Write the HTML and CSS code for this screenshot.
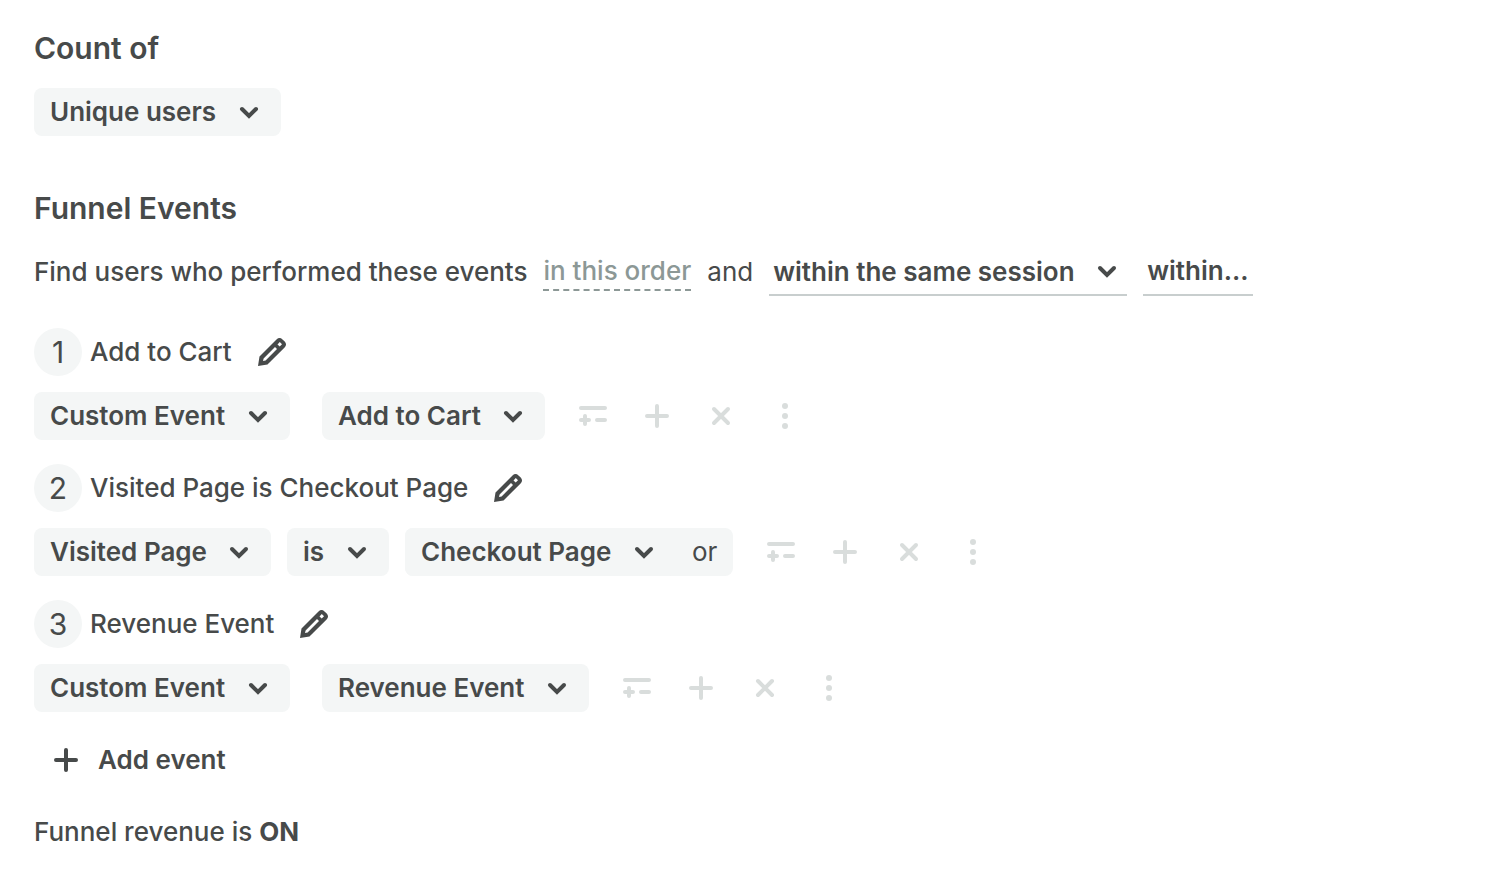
FILE: index.html
```html
<!DOCTYPE html>
<html lang="en">
<head>
    <meta charset="UTF-8">
    <meta name="viewport" content="width=device-width, initial-scale=1.0">
    <title>Funnel Events</title>
    <link rel="stylesheet" href="styles.css">
</head>
<body>
    <!-- Shared icons -->
    <svg class="sprite" aria-hidden="true">
        <symbol id="icon-chevron" viewBox="0 0 32 32">
            <path d="M9 13l7 7 7-7" fill="none" stroke="currentColor" stroke-width="4" stroke-linecap="round"/>
        </symbol>
        <symbol id="icon-pencil" viewBox="0 0 32 32">
            <path fill="currentColor" fill-rule="evenodd" d="M2 30L3.500 20.500L20.500 3.500Q23.500 0.700 26.500 3.400L28.700 5.600Q31.400 8.600 28.600 11.500L11.500 28.500ZM7.600 22.400L7 25L9.600 24.400L21 13L19 11ZM21.500 8.400L23.700 10.600L26 8.300L23.800 6.100Z"/>
        </symbol>
        <symbol id="icon-filter" viewBox="0 0 32 32">
            <path d="M4 8h24M4 20h8M8 16v8M20 20h8" fill="none" stroke="currentColor" stroke-width="4" stroke-linecap="round"/>
        </symbol>
        <symbol id="icon-plus" viewBox="0 0 32 32">
            <path d="M6 16h20M16 6v20" fill="none" stroke="currentColor" stroke-width="4" stroke-linecap="round"/>
        </symbol>
        <symbol id="icon-close" viewBox="0 0 32 32">
            <path d="M9 9l14 14M23 9L9 23" fill="none" stroke="currentColor" stroke-width="4" stroke-linecap="round"/>
        </symbol>
        <symbol id="icon-more" viewBox="0 0 32 32">
            <g fill="currentColor">
                <circle cx="16" cy="6" r="3"/>
                <circle cx="16" cy="16" r="3"/>
                <circle cx="16" cy="26" r="3"/>
            </g>
        </symbol>
    </svg>

    <form class="funnel">
        <h2><label for="count-of">Count of</label></h2>
        <div class="row">
            <div class="dropdown">
                <select id="count-of"><option>Unique users</option></select>
                <svg class="icon"><use href="#icon-chevron"/></svg>
            </div>
        </div>

        <h2 class="funnel-title">Funnel Events</h2>
        <div class="row">
            <span class="sentence">Find users who performed these events</span>
            <button type="button" class="order">in this order</button>
            <span class="and">and</span>
            <div class="dropdown underlined">
                <select aria-label="Session window"><option>within the same session</option></select>
                <svg class="icon"><use href="#icon-chevron"/></svg>
            </div>
            <button type="button" class="within">within...</button>
        </div>

        <ol class="events">
            <li class="event">
                <div class="event-name">
                    <span class="number">1</span>
                    <span>Add to Cart</span>
                    <button type="button" class="icon-button edit" aria-label="Rename"><svg class="icon"><use href="#icon-pencil"/></svg></button>
                </div>
                <div class="row">
                    <div class="dropdown event-type">
                        <select aria-label="Event type"><option>Custom Event</option></select>
                        <svg class="icon"><use href="#icon-chevron"/></svg>
                    </div>
                    <div class="dropdown">
                        <select aria-label="Event"><option>Add to Cart</option></select>
                        <svg class="icon"><use href="#icon-chevron"/></svg>
                    </div>
                    <div class="actions">
                        <button type="button" class="icon-button" aria-label="Filter"><svg class="icon"><use href="#icon-filter"/></svg></button>
                        <button type="button" class="icon-button" aria-label="Add"><svg class="icon"><use href="#icon-plus"/></svg></button>
                        <button type="button" class="icon-button" aria-label="Remove"><svg class="icon"><use href="#icon-close"/></svg></button>
                        <button type="button" class="icon-button" aria-label="More"><svg class="icon"><use href="#icon-more"/></svg></button>
                    </div>
                </div>
            </li>
            <li class="event">
                <div class="event-name">
                    <span class="number">2</span>
                    <span>Visited Page is Checkout Page</span>
                    <button type="button" class="icon-button edit" aria-label="Rename"><svg class="icon"><use href="#icon-pencil"/></svg></button>
                </div>
                <div class="row">
                    <div class="dropdown">
                        <select aria-label="Event type"><option>Visited Page</option></select>
                        <svg class="icon"><use href="#icon-chevron"/></svg>
                    </div>
                    <div class="dropdown">
                        <select aria-label="Operator"><option>is</option></select>
                        <svg class="icon"><use href="#icon-chevron"/></svg>
                    </div>
                    <div class="value-group">
                        <div class="dropdown">
                            <select aria-label="Page"><option>Checkout Page</option></select>
                            <svg class="icon"><use href="#icon-chevron"/></svg>
                        </div>
                        <button type="button" class="or">or</button>
                    </div>
                    <div class="actions">
                        <button type="button" class="icon-button" aria-label="Filter"><svg class="icon"><use href="#icon-filter"/></svg></button>
                        <button type="button" class="icon-button" aria-label="Add"><svg class="icon"><use href="#icon-plus"/></svg></button>
                        <button type="button" class="icon-button" aria-label="Remove"><svg class="icon"><use href="#icon-close"/></svg></button>
                        <button type="button" class="icon-button" aria-label="More"><svg class="icon"><use href="#icon-more"/></svg></button>
                    </div>
                </div>
            </li>
            <li class="event">
                <div class="event-name">
                    <span class="number">3</span>
                    <span>Revenue Event</span>
                    <button type="button" class="icon-button edit" aria-label="Rename"><svg class="icon"><use href="#icon-pencil"/></svg></button>
                </div>
                <div class="row">
                    <div class="dropdown event-type">
                        <select aria-label="Event type"><option>Custom Event</option></select>
                        <svg class="icon"><use href="#icon-chevron"/></svg>
                    </div>
                    <div class="dropdown">
                        <select aria-label="Event"><option>Revenue Event</option></select>
                        <svg class="icon"><use href="#icon-chevron"/></svg>
                    </div>
                    <div class="actions">
                        <button type="button" class="icon-button" aria-label="Filter"><svg class="icon"><use href="#icon-filter"/></svg></button>
                        <button type="button" class="icon-button" aria-label="Add"><svg class="icon"><use href="#icon-plus"/></svg></button>
                        <button type="button" class="icon-button" aria-label="Remove"><svg class="icon"><use href="#icon-close"/></svg></button>
                        <button type="button" class="icon-button" aria-label="More"><svg class="icon"><use href="#icon-more"/></svg></button>
                    </div>
                </div>
            </li>
        </ol>

        <button type="button" class="add-event">
            <svg class="icon"><use href="#icon-plus"/></svg>
            Add event
        </button>
        <p class="revenue">Funnel revenue is <strong>ON</strong></p>
    </form>
</body>
</html>
```
FILE: styles.css
```css
* {
    box-sizing: border-box;
}
body {
    margin: 0;
    background-color: #fff;
    color: #474a4a;
    font-family: Inter, "Liberation Sans", sans-serif;
    font-size: 26px;
    font-weight: 500;
    line-height: 48px;
}
.sprite {
    display: none;
}
.funnel {
    padding: 24px 34px 16px;
}
h2 {
    margin: 0 0 16px;
    font-size: 30px;
    font-weight: 600;
    line-height: 48px;
}
.funnel-title {
    margin-top: 48px;
}
button,
select {
    margin: 0;
    padding: 0;
    border: none;
    background: none;
    color: inherit;
    font: inherit;
    cursor: pointer;
}
.icon {
    display: block;
    flex: none;
    width: 32px;
    height: 32px;
}
.row {
    display: flex;
    flex-wrap: wrap;
    align-items: center;
    gap: 16px;
}
.dropdown {
    display: grid;
    align-items: center;
    height: 48px;
    border-radius: 8px;
    background-color: #f4f6f6;
    font-weight: 600;
}
.dropdown select,
.dropdown .icon {
    grid-area: 1 / 1;
}
.dropdown select {
    appearance: none;
    height: 48px;
    padding: 0 64px 2px 16px;
}
.dropdown .icon {
    justify-self: end;
    margin-right: 16px;
    pointer-events: none;
}
.underlined,
.within {
    height: 48px;
    border-bottom: 2px solid #c8cece;
    border-radius: 0;
    background: none;
    font-weight: 600;
}
.underlined select {
    height: 46px;
    padding: 0 52px 0 4px;
}
.underlined .icon {
    margin-right: 4px;
}
.within {
    padding: 0 4px;
    line-height: 46px;
}
.order {
    height: 38px;
    border-bottom: 2px dashed #8c9896;
    color: #8c9896;
    line-height: 36px;
}
.and,
.or {
    font-weight: 400;
}
.events {
    margin: 32px 0 24px;
    padding: 0;
    list-style: none;
}
.event + .event {
    margin-top: 24px;
}
.event-name {
    display: flex;
    align-items: center;
    gap: 8px;
    margin-bottom: 16px;
}
.number {
    width: 48px;
    height: 48px;
    border-radius: 50%;
    background-color: #f4f6f6;
    font-size: 30px;
    font-weight: 400;
    text-align: center;
}
.icon-button {
    display: grid;
    place-items: center;
    width: 48px;
    height: 48px;
    color: #d9dddc;
}
.edit {
    margin-left: 8px;
    color: #474a4a;
}
.event-type {
    margin-right: 16px;
}
.value-group {
    display: flex;
    border-radius: 8px;
    background-color: #f4f6f6;
}
.or {
    padding: 0 16px;
}
.actions {
    display: flex;
    gap: 16px;
    margin-left: 8px;
}
.add-event {
    display: flex;
    align-items: center;
    gap: 16px;
    padding-left: 16px;
    font-weight: 600;
}
.revenue {
    margin: 24px 0 0;
}
.revenue strong {
    font-weight: 700;
}
```
